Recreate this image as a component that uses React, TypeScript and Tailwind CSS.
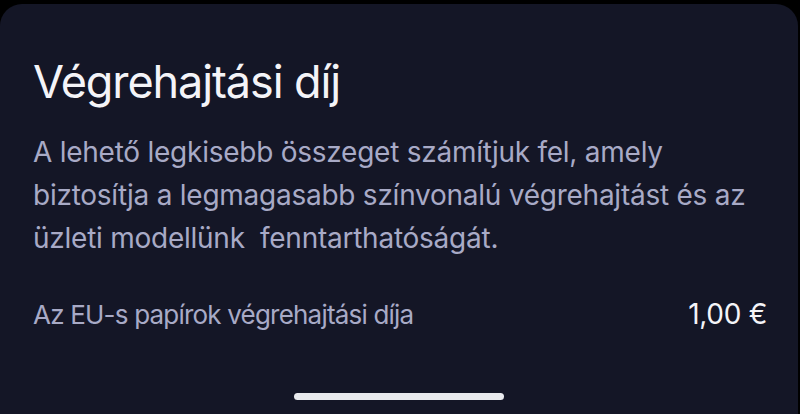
export default function App() {
  return (
    <div className="w-[800px] h-[414px] bg-black pt-[4px] overflow-hidden" style={{ fontFamily: "Inter, 'Noto Sans', sans-serif" }}>
      <div className="w-[798px] h-[410px] bg-[#141626] rounded-t-[22px] flex flex-col pl-[33px] pr-[31px]">
        <h1 className="mt-[51px] text-[45px] leading-[54px] text-[#f4f4f8] font-normal tracking-[-1.1px] whitespace-nowrap">Végrehajtási díj</h1>
        <p className="mt-[22px] text-[28px] leading-[43px] text-[#a8aac6] tracking-[-0.25px] whitespace-nowrap">
          A lehető legkisebb összeget számítjuk fel, amely
          <br />
          biztosítja a legmagasabb színvonalú végrehajtást és az
          <br />
          üzleti modellünk&nbsp; fenntarthatóságát.
        </p>
        <div className="mt-[38px] flex items-baseline justify-between">
          <span className="text-[26px] leading-[32px] text-[#a8aac6] tracking-[-0.8px] whitespace-nowrap">Az EU-s papírok végrehajtási díja</span>
          <span className="text-[28px] leading-[32px] text-[#f4f4f8] tracking-[-0.3px] whitespace-nowrap">1,00 €</span>
        </div>
        <div className="flex-1" />
        <div className="flex justify-center pb-[14px] -ml-[33px] -mr-[31px]">
          <div className="w-[210px] h-[7px] rounded-full bg-[#e9eaee]" />
        </div>
      </div>
    </div>
  );
}
